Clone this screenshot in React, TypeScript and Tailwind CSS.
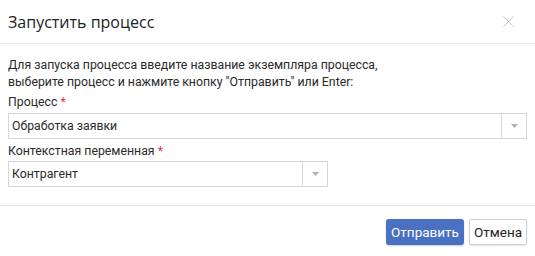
import React from 'react';

const Arrow: React.FC = () => (
  <div className="w-[25px] h-full border-l border-[#d6d6d6] flex items-center justify-center">
    <svg width="7" height="4" viewBox="0 0 7 4">
      <path d="M0 0h7L3.5 4z" fill="#b0b0b0" />
    </svg>
  </div>
);

const App: React.FC = () => {
  return (
    <div
      className="w-[535px] h-[256px] bg-white text-[#333] flex flex-col"
      style={{ fontFamily: 'Roboto, "Open Sans", sans-serif' }}
    >
      <div
        className="h-[44px] border-b border-[#e6e6e6] flex items-center justify-between pl-2 pr-[21px]"
        style={{ fontFamily: '"Open Sans", sans-serif' }}
      >
        <span className="text-[16px] text-[#222]">Запустить процесс</span>
        <svg width="11" height="11" viewBox="0 0 11 11">
          <path d="M0.5 0.5l10 10M10.5 0.5l-10 10" stroke="#c8c8c8" strokeWidth="1" />
        </svg>
      </div>

      <div className="flex-1 px-2 pt-[13px] text-[12.3px] leading-[17px] text-[#2a2a2a]">
        <p>
          Для запуска процесса введите название экземпляра процесса,
          <br />
          выберите процесс и нажмите кнопку "Отправить" или Enter:
        </p>
        <div className="mt-[3px] mb-[2px]">
          Процесс <span className="text-[#e0334a]">*</span>
        </div>
        <div className="h-[26px] border border-[#d6d6d6] flex items-center">
          <span className="flex-1 pl-[3px]">Обработка заявки</span>
          <Arrow />
        </div>
        <div className="mt-[4px] mb-[1px]">
          Контекстная переменная <span className="text-[#e0334a]">*</span>
        </div>
        <div className="w-[320px] h-[26px] border border-[#d6d6d6] flex items-center">
          <span className="flex-1 pl-[3px]">Контрагент</span>
          <Arrow />
        </div>
      </div>

      <div className="h-[51px] border-t border-[#e6e6e6] flex items-start justify-end gap-[5px] pr-2 pt-[13px] text-[13.5px]">
        <button className="w-[78px] h-[26px] rounded-[3px] bg-[#4a70c2] text-white shadow-[0_1px_2px_rgba(0,0,0,0.2)]">
          Отправить
        </button>
        <button className="w-[58px] h-[26px] rounded-[2px] bg-white border border-[#cfcfcf] text-[#222] shadow-[0_1px_2px_rgba(0,0,0,0.1)]">
          Отмена
        </button>
      </div>
    </div>
  );
};

export default App;
